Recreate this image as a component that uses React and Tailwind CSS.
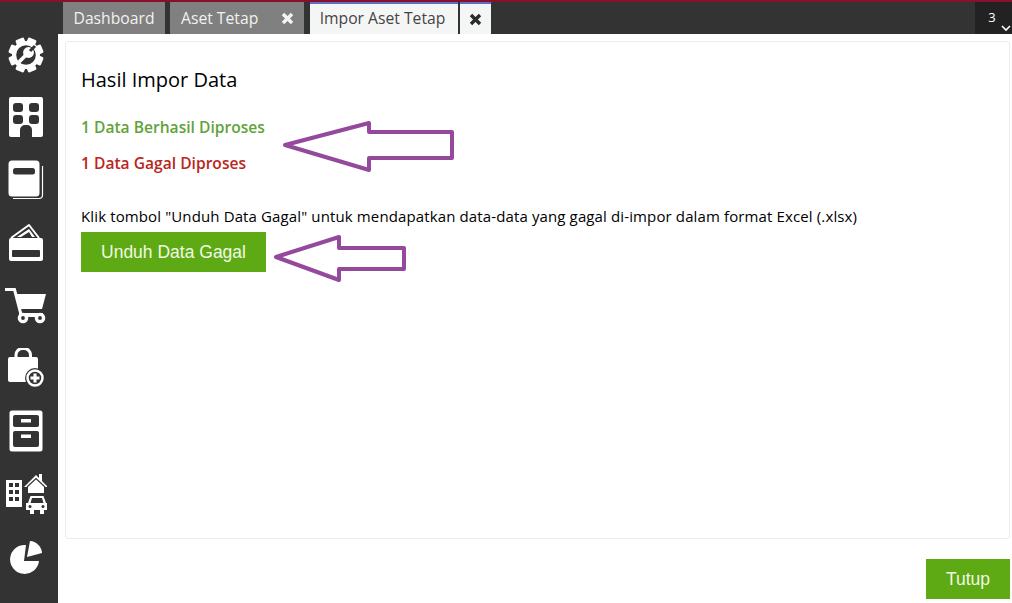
const D = "#333333";

function Gear() {
  const teeth = [22.5, 67.5, 112.5, 157.5, 202.5, 247.5, 292.5, 337.5];
  return (
    <svg width="36" height="36" viewBox="0 0 36 36">
      {teeth.map((a) => (
        <rect key={a} x="13.5" y="0.5" width="9" height="8" rx="1.5" fill="#fff" transform={`rotate(${a} 18 18)`} />
      ))}
      <circle cx="18" cy="18" r="14" fill="#fff" />
      <circle cx="18" cy="18" r="9.8" fill={D} />
      <path d="M12 24 L19 17" stroke="#fff" strokeWidth="3.8" strokeLinecap="round" />
      <circle cx="20.5" cy="15.5" r="5.4" fill="#fff" />
      <path d="M22 14 L27 9" stroke={D} strokeWidth="3" />
    </svg>
  );
}
function Building() {
  return (
    <svg width="36" height="42" viewBox="0 0 36 42">
      <path d="M3 0 H33 a2 2 0 0 1 2 2 V38 a2 2 0 0 1-2 2 H24 V33 a5 5 0 0 0-5-5 H17 a5 5 0 0 0-5 5 V40 H3 a2 2 0 0 1-2-2 V2 a2 2 0 0 1 2-2 Z" fill="#fff" />
      <rect x="5" y="6" width="10" height="9" rx="3" fill={D} />
      <rect x="21" y="6" width="10" height="9" rx="3" fill={D} />
      <rect x="5" y="18" width="10" height="9" rx="3" fill={D} />
      <rect x="21" y="18" width="10" height="9" rx="3" fill={D} />
    </svg>
  );
}
function Book() {
  return (
    <svg width="36" height="40" viewBox="0 0 36 40">
      <path d="M5 38.5 H31 a3.5 3.5 0 0 0 3.5-3.5 V6" fill="none" stroke="#fff" strokeWidth="1.2" />
      <rect x="0.5" y="0.5" width="31" height="36" rx="3.5" fill="#fff" />
      <rect x="5" y="8" width="22" height="6.5" rx="2.5" fill={D} />
    </svg>
  );
}
function Money() {
  return (
    <svg width="36" height="40" viewBox="0 0 36 40">
      <path d="M3 15 L21 2 L31 15" fill="none" stroke="#fff" strokeWidth="2" strokeLinejoin="round" />
      <path d="M9 14 L21 6 L27 14 Z" fill="#fff" />
      <path d="M13 14 L21 9 L24 14 Z" fill={D} />
      <path d="M3 15 H33 a2 2 0 0 1 2 2 V36 a2 2 0 0 1-2 2 H3 a2 2 0 0 1-2-2 V17 a2 2 0 0 1 2-2 Z" fill="#fff" />
      <rect x="4" y="27" width="28" height="7" rx="1" fill={D} />
    </svg>
  );
}
function Cart() {
  return (
    <svg width="42" height="36" viewBox="0 0 42 36">
      <path d="M0 1.5 H9.5 L16 26.5 H36" fill="none" stroke="#fff" strokeWidth="3" />
      <path d="M11 6 H41 L37 21 H15 Z" fill="#fff" />
      <rect x="14" y="25" width="24" height="4" fill="#fff" />
      <circle cx="18" cy="30" r="3.6" fill={D} stroke="#fff" strokeWidth="3.4" />
      <circle cx="35" cy="30" r="3.6" fill={D} stroke="#fff" strokeWidth="3.4" />
    </svg>
  );
}
function BagPlus() {
  return (
    <svg width="38" height="40" viewBox="0 0 38 40">
      <path d="M9 9 V7 a6.5 6.5 0 0 1 6.5-6.5 H17 a6.5 6.5 0 0 1 6.5 6.5 V9" fill="none" stroke="#fff" strokeWidth="3" />
      <path d="M1 11 a2 2 0 0 1 2-2 H29 a2 2 0 0 1 2 2 V34 H3 a2 2 0 0 1-2-2 Z" fill="#fff" />
      <circle cx="28" cy="30" r="10" fill={D} />
      <circle cx="28" cy="30" r="7.5" fill={D} stroke="#fff" strokeWidth="2.5" />
      <path d="M28 25.5 V34.5 M23.5 30 H32.5" stroke="#fff" strokeWidth="3" />
    </svg>
  );
}
function Cabinet() {
  return (
    <svg width="34" height="42" viewBox="0 0 34 42">
      <rect x="0.5" y="0.5" width="33" height="41" rx="2.5" fill="#fff" />
      <rect x="4" y="5" width="26" height="12" rx="2" fill={D} />
      <rect x="4" y="21" width="26" height="16" rx="2" fill={D} />
      <rect x="12" y="9" width="10" height="3.5" fill="#fff" />
      <rect x="12" y="24.5" width="10" height="3.5" fill="#fff" />
    </svg>
  );
}
function CityCar() {
  return (
    <svg width="42" height="42" viewBox="0 0 42 42">
      <path d="M1 7 H17 V34 H1 Z" fill="#fff" />
      {[10, 17, 24].map((y) => [4, 10].map((x) => <rect key={`${x}${y}`} x={x} y={y} width="4" height="4" fill={D} />))}
      <path d="M19 14 L31 2 L34 5 V1 H37 V8 L43 14 H39 V20 H23 V14 Z" fill="#fff" />
      <path d="M22 14 L31 5.5 L40 14" fill="none" stroke={D} strokeWidth="1.2" />
      <path d="M23 30 L25.5 23 H38.5 L41 30 H42 V37 H39 V41 H35 V37 H29 V41 H25 V37 H21 V30 Z" fill="#fff" />
      <path d="M25.5 30 L27 25 H37 L38.5 30 Z" fill={D} />
      <circle cx="25" cy="33.5" r="1.5" fill={D} />
      <circle cx="38" cy="33.5" r="1.5" fill={D} />
    </svg>
  );
}
function Pie() {
  return (
    <svg width="36" height="36" viewBox="0 0 36 36">
      <path d="M18 6 A14.5 14.5 0 1 0 31 22 L16 22 Z" fill="#fff" />
      <path d="M22 2 A13 13 0 0 1 34 14 L19 18 Z" fill="#fff" />
    </svg>
  );
}

const icons = [Gear, Building, Book, Money, Cart, BagPlus, Cabinet, CityCar, Pie];

function Arrow({ w, h, d }) {
  return (
    <svg width={w} height={h} viewBox={`0 0 ${w} ${h}`} className="shrink-0">
      <path d={d} fill="none" stroke="#94499c" strokeWidth="4" strokeLinejoin="round" />
    </svg>
  );
}

function X({ color }) {
  return (
    <svg width="13" height="13" viewBox="0 0 13 13">
      <path d="M2 2 L11 11 M11 2 L2 11" stroke={color} strokeWidth="3.4" />
    </svg>
  );
}

export default function App() {
  return (
    <div className="w-[1012px] h-[603px] overflow-hidden bg-[#333333] flex flex-col font-['Open_Sans',sans-serif]">
      <div className="h-[2px] shrink-0 bg-[#8a0f2e]" />
      <div className="h-[32px] shrink-0 flex pl-[63px] items-stretch">
        <div className="w-[102px] pt-[1px] bg-[#808080] text-[#f2f2f2] text-[15.7px] flex items-center justify-center">Dashboard</div>
        <div className="ml-[5px] w-[134px] pt-[1px] bg-[#808080] text-[#f2f2f2] text-[15.7px] flex items-center justify-between pl-[11px] pr-[10px]">
          <span>Aset Tetap</span>
          <X color="#f4f4f4" />
        </div>
        <div className="ml-[6px] w-[148px] pr-[3px] bg-[#f4f6f6] border-t-2 border-[#5a6fc0] text-[#444444] text-[15.7px] flex items-center justify-center">Impor Aset Tetap</div>
        <div className="ml-[2px] w-[31px] bg-[#f4f6f6] border-t-2 border-[#5a6fc0] flex items-center justify-center">
          <X color="#2b2b2b" />
        </div>
        <div className="ml-auto w-[37px] bg-[#222222] relative flex items-center justify-center pr-[3px] text-white text-[13px]">
          3
          <svg className="absolute right-[1px] bottom-[2px]" width="10" height="7" viewBox="0 0 10 7">
            <path d="M1 1 L5 5 L9 1" fill="none" stroke="#fff" strokeWidth="1.6" />
          </svg>
        </div>
      </div>
      <div className="flex-1 flex min-h-0">
        <div className="w-[58px] shrink-0 flex flex-col items-center gap-[20.7px]">
          {icons.map((I, i) => (
            <div key={i} className="h-[42px] w-full flex items-center justify-center pr-[6px]">
              <I />
            </div>
          ))}
        </div>
        <div className="flex-1 bg-white flex flex-col pt-[7px] pl-[7px] pr-[2px]">
          <div className="h-[498px] shrink-0 border border-[#ececec] rounded-[3px] pl-[15px] pt-[24px] text-black">
            <div className="text-[20px] leading-[28px]">Hasil Impor Data</div>
            <div className="mt-[22px] relative h-[72px]">
              <div className="text-[15.6px] font-semibold leading-[22px] text-[#5fa33b]">1 Data Berhasil Diproses</div>
              <div className="mt-[14px] text-[15.6px] font-semibold leading-[22px] text-[#b9261c]">1 Data Gagal Diproses</div>
              <div className="absolute left-[200px] top-[1px]">
                <Arrow w={176} h={58} d="M4 28 L88 6 V15 H171 V41 H88 V53 Z" />
              </div>
            </div>
            <div className="mt-[18px] text-[15px] tracking-[0.126px] leading-[20px] text-black">Klik tombol "Unduh Data Gagal" untuk mendapatkan data-data yang gagal di-impor dalam format Excel (.xlsx)</div>
            <div className="mt-[6px] h-[40px] flex items-center">
              <div className="w-[185px] h-[40px] bg-[#5eaa14] text-[#f2f8e4] text-[17.5px] flex items-center justify-center font-['Liberation_Sans',sans-serif]">Unduh Data Gagal</div>
              <div className="ml-[7px]">
                <Arrow w={134} h={60} d="M3 35 L66 15 V26 H131 V47 H66 V58 Z" />
              </div>
            </div>
          </div>
          <div className="flex justify-end mt-[20px]">
            <div className="w-[84px] h-[40px] bg-[#5eaa14] text-[#f2f8e4] text-[17.5px] flex items-center justify-center font-['Liberation_Sans',sans-serif]">Tutup</div>
          </div>
        </div>
      </div>
    </div>
  );
}
